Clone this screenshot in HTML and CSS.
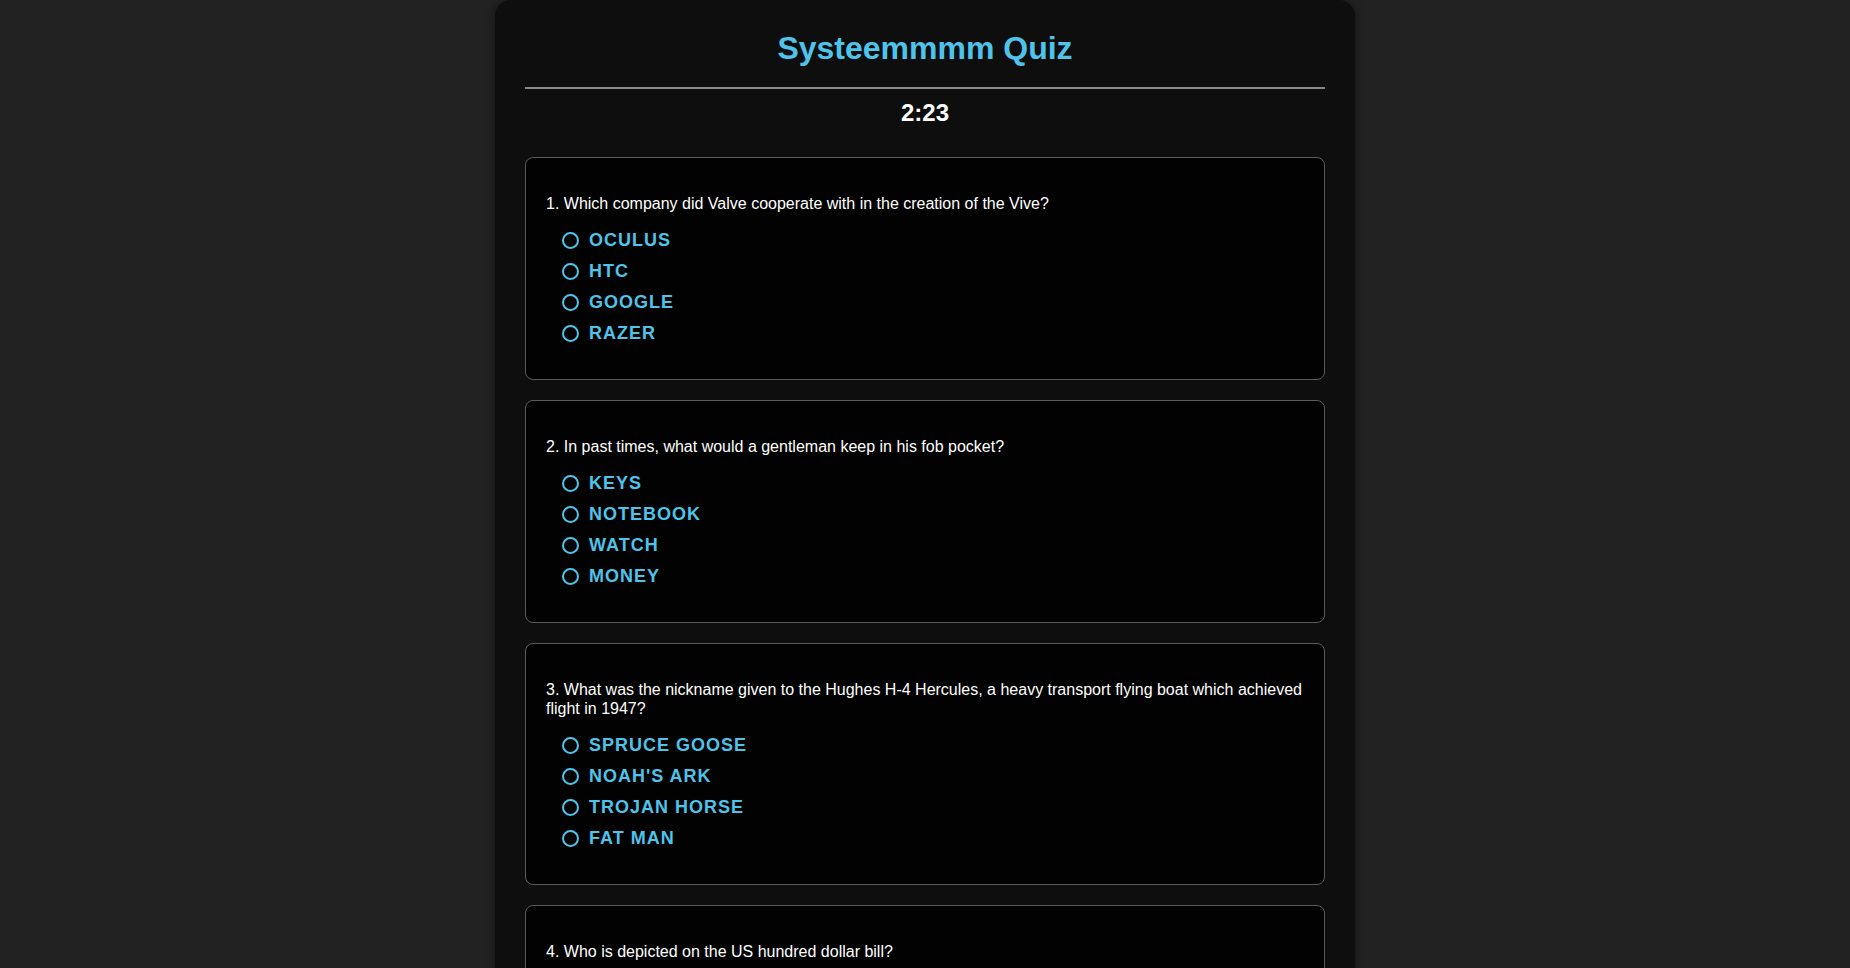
FILE: index.html
```html
<!DOCTYPE html>
<html lang="en">
<head>
<meta charset="utf-8">
<title>Systeemmmm Quiz</title>
<link rel="stylesheet" href="styles.css">
</head>
<body>
<main class="quiz">
  <h1 class="title">Systeemmmm Quiz</h1>
  <div class="timer">2:23</div>

  <section class="card">
    <p class="question">1. Which company did Valve cooperate with in the creation of the Vive?</p>
    <div class="options">
      <label class="option"><input type="radio" name="q1"><span>OCULUS</span></label>
      <label class="option"><input type="radio" name="q1"><span>HTC</span></label>
      <label class="option"><input type="radio" name="q1"><span>GOOGLE</span></label>
      <label class="option"><input type="radio" name="q1"><span>RAZER</span></label>
    </div>
  </section>

  <section class="card">
    <p class="question">2. In past times, what would a gentleman keep in his fob pocket?</p>
    <div class="options">
      <label class="option"><input type="radio" name="q2"><span>KEYS</span></label>
      <label class="option"><input type="radio" name="q2"><span>NOTEBOOK</span></label>
      <label class="option"><input type="radio" name="q2"><span>WATCH</span></label>
      <label class="option"><input type="radio" name="q2"><span>MONEY</span></label>
    </div>
  </section>

  <section class="card">
    <p class="question">3. What was the nickname given to the Hughes H-4 Hercules, a heavy transport flying boat which achieved flight in 1947?</p>
    <div class="options">
      <label class="option"><input type="radio" name="q3"><span>SPRUCE GOOSE</span></label>
      <label class="option"><input type="radio" name="q3"><span>NOAH'S ARK</span></label>
      <label class="option"><input type="radio" name="q3"><span>TROJAN HORSE</span></label>
      <label class="option"><input type="radio" name="q3"><span>FAT MAN</span></label>
    </div>
  </section>

  <section class="card">
    <p class="question">4. Who is depicted on the US hundred dollar bill?</p>
    <div class="options">
      <label class="option"><input type="radio" name="q4"><span>GEORGE WASHINGTON</span></label>
      <label class="option"><input type="radio" name="q4"><span>BENJAMIN FRANKLIN</span></label>
      <label class="option"><input type="radio" name="q4"><span>ABRAHAM LINCOLN</span></label>
      <label class="option"><input type="radio" name="q4"><span>THOMAS JEFFERSON</span></label>
    </div>
  </section>
</main>
</body>
</html>
```

FILE: styles.css
```css
* { box-sizing: border-box; }

html, body {
  margin: 0;
  padding: 0;
  background: #222222;
  font-family: "Liberation Sans", Arial, sans-serif;
  color: #ffffff;
}

.quiz {
  width: 860px;
  margin: 0 auto;
  padding: 30px 30px 30px;
  background: #0e0e0e;
  border-radius: 16px;
  box-shadow: 0 0 10px rgba(0, 0, 0, 0.45);
}

.title {
  margin: 0;
  font-size: 32px;
  line-height: 37px;
  font-weight: bold;
  text-align: center;
  color: #4fc3ea;
  padding-bottom: 20px;
  border-bottom: 2px solid #8a8a8a;
}

.timer {
  margin: 10px 0 30px;
  font-size: 24px;
  line-height: 28px;
  font-weight: bold;
  text-align: center;
  color: #ffffff;
}

.card {
  background: #020202;
  border: 1px solid #5a5a5a;
  border-radius: 8px;
  padding: 20px 20px 20px;
  margin-bottom: 20px;
}

.question {
  margin: 16px 0 12px;
  font-size: 16px;
  line-height: 19px;
  color: #ffffff;
}

.options {
  display: flex;
  flex-direction: column;
  padding-left: 16px;
  margin-bottom: 10px;
}

.option {
  display: flex;
  align-items: center;
  gap: 10px;
  padding: 5px 0;
  font-size: 18px;
  line-height: 21px;
  font-weight: bold;
  letter-spacing: 1px;
  color: #4fc3ea;
  cursor: pointer;
}

.option input {
  appearance: none;
  -webkit-appearance: none;
  margin: 0;
  width: 17px;
  height: 17px;
  border: 2px solid #4fc3ea;
  border-radius: 50%;
  background: transparent;
  flex: none;
}
```
